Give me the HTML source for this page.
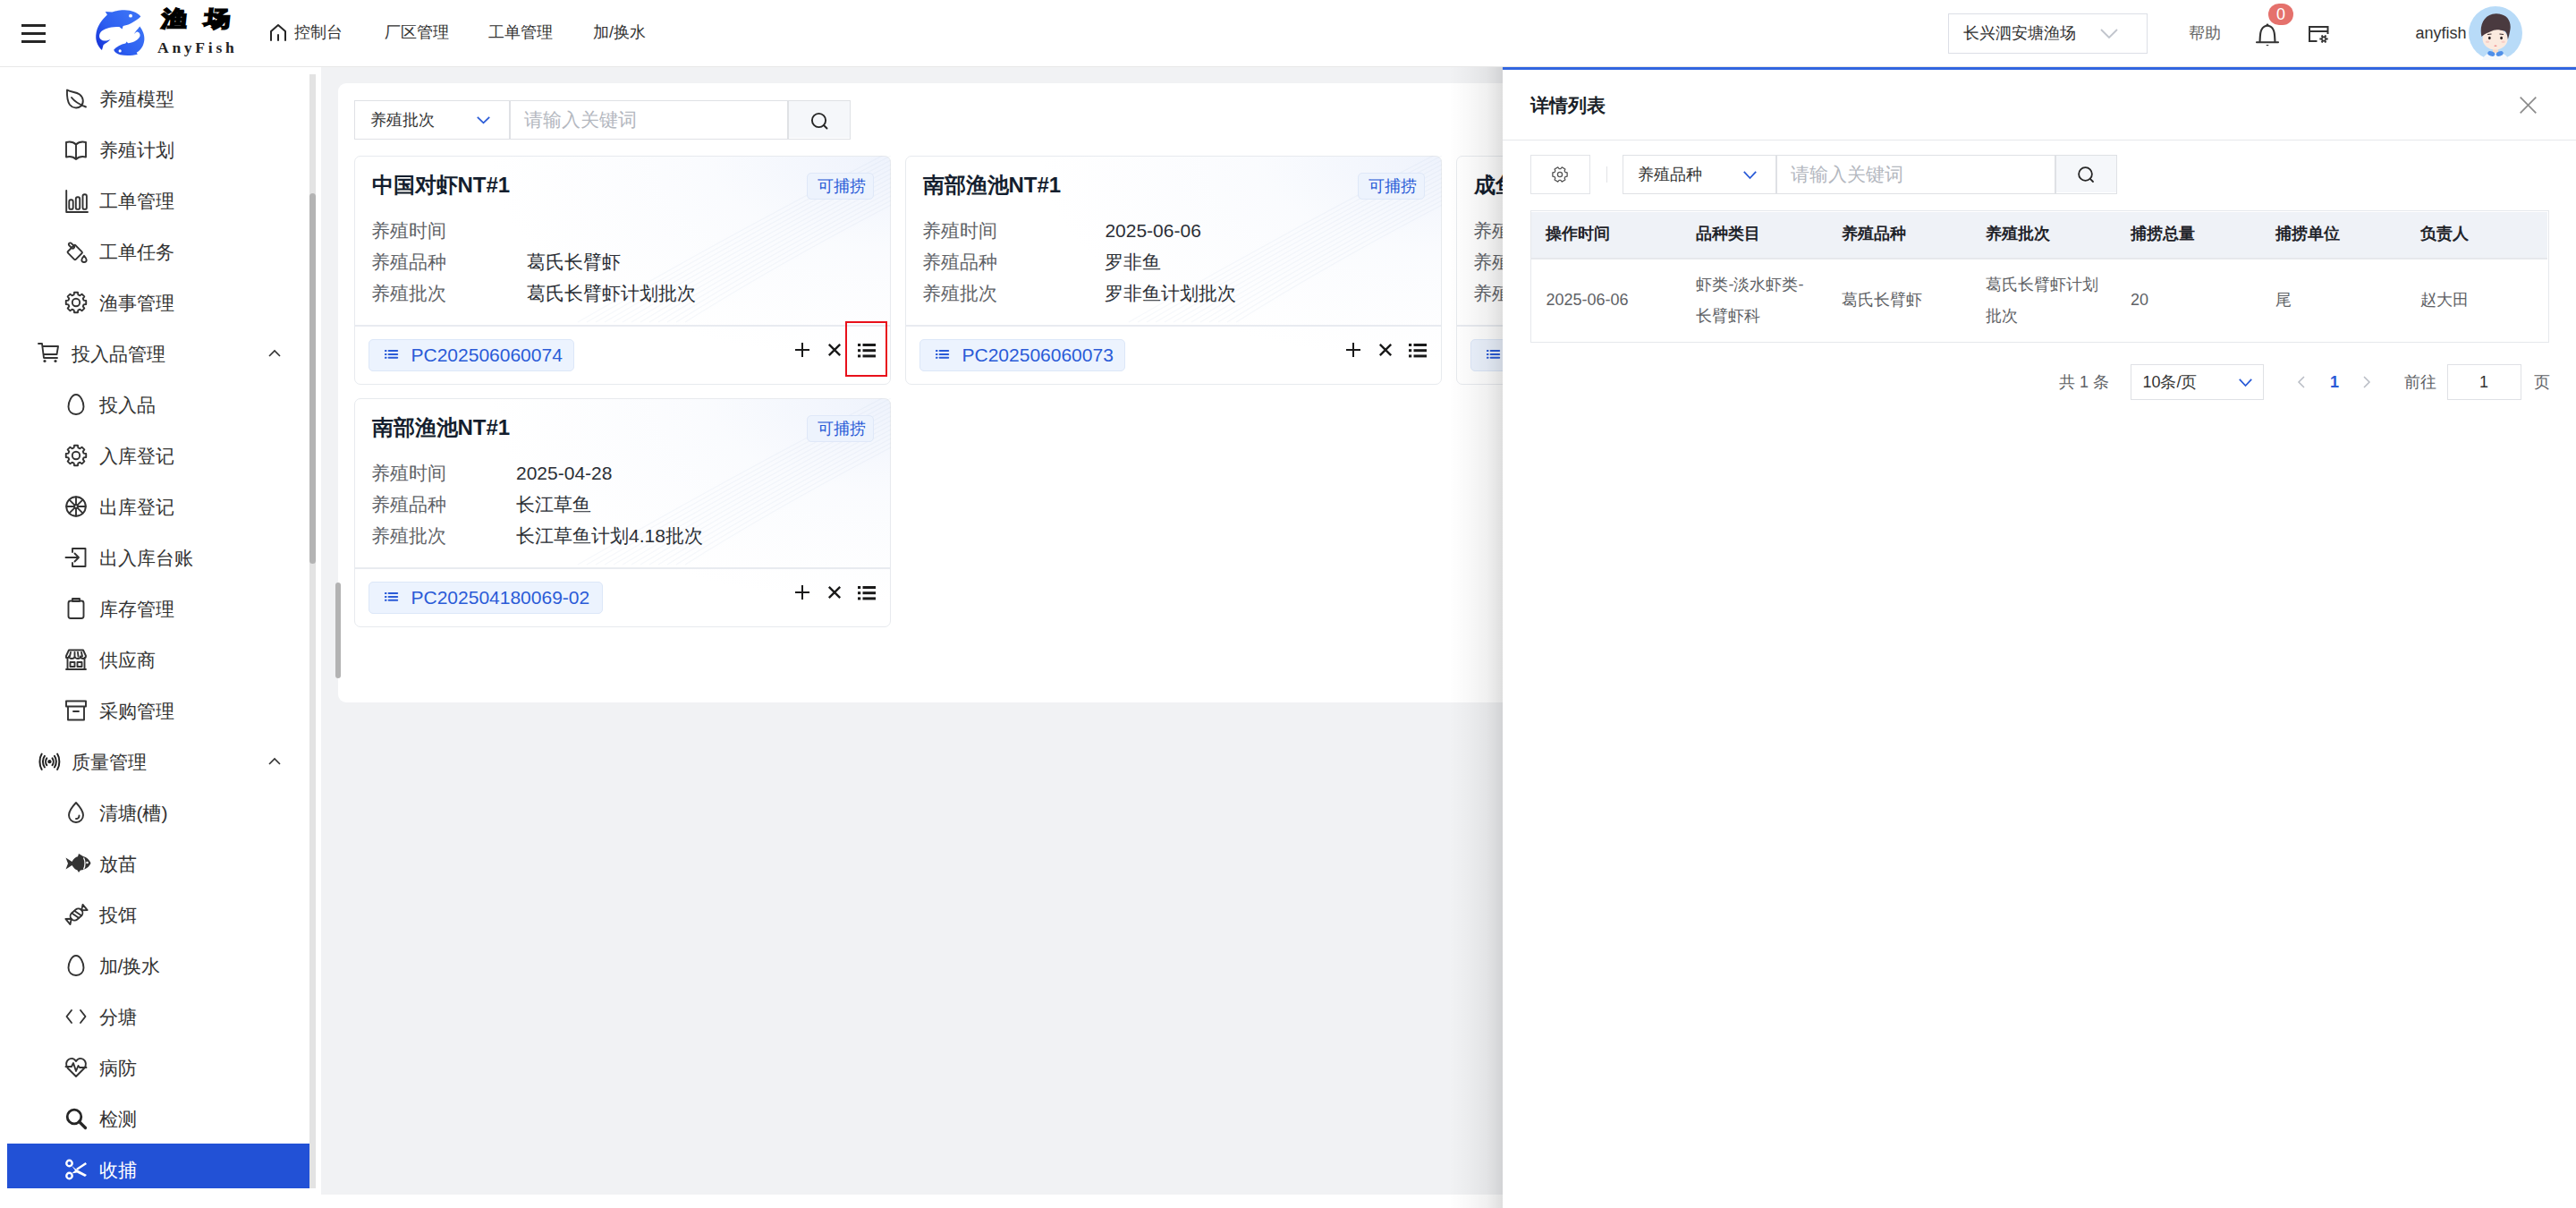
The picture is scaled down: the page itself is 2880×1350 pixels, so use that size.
<!DOCTYPE html>
<html><head><meta charset="utf-8">
<style>
*{box-sizing:border-box;margin:0;padding:0}
html,body{width:2880px;height:1350px;overflow:hidden;background:#fff;font-family:"Liberation Sans",sans-serif;color:#333}
.a{position:absolute}
.t{position:absolute;white-space:nowrap}
svg{position:absolute;overflow:visible}
</style></head><body>
<div class="a" style="left:359px;top:75px;width:2521px;height:1260px;background:#f1f2f4"></div>
<div class="a" style="left:378px;top:92.5px;width:2484px;height:692.0px;background:#fff;border-radius:9px"></div>
<div class="a" style="left:396px;top:111.5px;width:555px;height:44.0px;border:1.5px solid #dfe1e5;background:#fff"></div>
<div class="a" style="left:569px;top:112px;width:1.5px;height:43px;background:#dfe1e5"></div>
<div class="a" style="left:880px;top:112px;width:1.5px;height:43px;background:#dfe1e5"></div>
<div class="a" style="left:881.5px;top:113px;width:68.0px;height:41px;background:#f5f7fa"></div>
<div class="t" style="left:414px;top:119.9px;font-size:18px;line-height:28px;height:28px;color:#333;font-weight:normal;">养殖批次</div>
<svg style="left:533px;top:130px;" width="15" height="8" viewBox="0 0 15 8"><path d="M0.8,0.8 L7.5,7.3 L14.2,0.8" fill="none" stroke="#2a5bd7" stroke-width="1.8"/></svg>
<div class="t" style="left:585.6px;top:117.1px;font-size:21px;line-height:33px;height:33px;color:#b4b8bf;font-weight:normal;">请输入关键词</div>
<svg style="left:907px;top:125.5px;" width="19" height="18" viewBox="0 0 19 18"><circle cx="8.5" cy="8.5" r="7.6" fill="none" stroke="#262626" stroke-width="1.9"/><path d="M14,14 L17.5,17.5" stroke="#262626" stroke-width="1.9" stroke-linecap="round"/></svg>
<div class="a" style="left:396px;top:174px;width:600px;height:256px;border:1.5px solid #e7eaee;border-radius:7px;background:radial-gradient(ellipse 75% 90% at 100% 0%,rgba(225,233,250,0.55) 0%,rgba(240,244,252,0.35) 45%,rgba(255,255,255,0) 100%),#fff"></div>
<svg style="left:396px;top:174px;overflow:hidden" width="600" height="256" viewBox="0 0 600 256"><path d="M250,186 Q420,88 600,-5" fill="none" stroke="rgba(185,198,225,0.13)" stroke-width="1.2"/><path d="M260,186 Q424,91 600,0" fill="none" stroke="rgba(185,198,225,0.13)" stroke-width="1.2"/><path d="M270,186 Q428,94 600,5" fill="none" stroke="rgba(185,198,225,0.13)" stroke-width="1.2"/><path d="M280,186 Q432,97 600,10" fill="none" stroke="rgba(185,198,225,0.13)" stroke-width="1.2"/><path d="M290,186 Q436,100 600,15" fill="none" stroke="rgba(185,198,225,0.13)" stroke-width="1.2"/><path d="M300,186 Q440,103 600,20" fill="none" stroke="rgba(185,198,225,0.13)" stroke-width="1.2"/><path d="M310,186 Q444,106 600,25" fill="none" stroke="rgba(185,198,225,0.13)" stroke-width="1.2"/><path d="M320,186 Q448,109 600,30" fill="none" stroke="rgba(185,198,225,0.13)" stroke-width="1.2"/><path d="M330,186 Q452,112 600,35" fill="none" stroke="rgba(185,198,225,0.13)" stroke-width="1.2"/><path d="M340,186 Q456,115 600,40" fill="none" stroke="rgba(185,198,225,0.13)" stroke-width="1.2"/><path d="M350,186 Q460,118 600,45" fill="none" stroke="rgba(185,198,225,0.13)" stroke-width="1.2"/><path d="M360,186 Q464,121 600,50" fill="none" stroke="rgba(185,198,225,0.13)" stroke-width="1.2"/><path d="M370,186 Q468,124 600,55" fill="none" stroke="rgba(185,198,225,0.13)" stroke-width="1.2"/></svg>
<div class="t" style="left:415.5px;top:188.4px;font-size:24px;line-height:38px;height:38px;color:#141e2e;font-weight:bold;">中国对虾NT#1</div>
<div class="a" style="left:901.5px;top:193px;width:75.5px;height:29.5px;background:#edf3fd;border:1px solid #dfe8f8;border-radius:5px"></div>
<div class="t" style="left:914px;top:194.3px;font-size:18px;line-height:28px;height:28px;color:#2a5bd7;font-weight:normal;">可捕捞</div>
<div class="t" style="left:415px;top:241.3px;font-size:21px;line-height:33px;height:33px;color:#5f6368;font-weight:normal;">养殖时间</div>
<div class="t" style="left:415px;top:276.0px;font-size:21px;line-height:33px;height:33px;color:#5f6368;font-weight:normal;">养殖品种</div>
<div class="t" style="left:589px;top:276.0px;font-size:21px;line-height:33px;height:33px;color:#2b2f36;font-weight:normal;">葛氏长臂虾</div>
<div class="t" style="left:415px;top:310.6px;font-size:21px;line-height:33px;height:33px;color:#5f6368;font-weight:normal;">养殖批次</div>
<div class="t" style="left:589px;top:310.6px;font-size:21px;line-height:33px;height:33px;color:#2b2f36;font-weight:normal;">葛氏长臂虾计划批次</div>
<div class="a" style="left:397px;top:363px;width:598px;height:1.5px;background:#e8ebf0"></div>
<div class="a" style="left:412.3px;top:379px;width:230.2px;height:35.69999999999999px;background:#ecf3fe;border:1px solid #dce7f8;border-radius:5px"></div>
<svg style="left:429.6px;top:391px;" width="16" height="10" viewBox="0 0 16 10"><g fill="#2a5bd7"><rect x="0" y="0" width="2.4" height="2" rx="0.5"/><rect x="3.6" y="0" width="11.6" height="2" rx="1"/><rect x="0" y="3.9" width="2.4" height="2" rx="0.5"/><rect x="3.6" y="3.9" width="11.6" height="2" rx="1"/><rect x="0" y="7.8" width="2.4" height="2" rx="0.5"/><rect x="3.6" y="7.8" width="11.6" height="2" rx="1"/></g></svg>
<div class="t" style="left:459.5px;top:380.3px;font-size:21px;line-height:33px;height:33px;color:#2a5bd7;font-weight:normal;">PC202506060074</div>
<svg style="left:889px;top:383.4px;" width="16" height="16" viewBox="0 0 16 16"><path d="M8,0 L8,16 M0,8 L16,8" stroke="#1a1a1a" stroke-width="2"/></svg>
<svg style="left:926px;top:384.4px;" width="14" height="14" viewBox="0 0 14 14"><path d="M0.8,0.8 L13.2,13.2 M13.2,0.8 L0.8,13.2" stroke="#1a1a1a" stroke-width="2.4"/></svg>
<svg style="left:959px;top:383.7px;" width="20" height="16" viewBox="0 0 20 16"><g fill="#1a1a1a"><rect x="0" y="0" width="3.2" height="3"/><rect x="5.5" y="0" width="14.5" height="3"/><rect x="0" y="6.2" width="3.2" height="3"/><rect x="5.5" y="6.2" width="14.5" height="3"/><rect x="0" y="12.4" width="3.2" height="3"/><rect x="5.5" y="12.4" width="14.5" height="3"/></g></svg>
<div class="a" style="left:944.6px;top:358.6px;width:47.69999999999993px;height:62.599999999999966px;border:2px solid #e8101a"></div>
<div class="a" style="left:1012px;top:174px;width:600px;height:256px;border:1.5px solid #e7eaee;border-radius:7px;background:radial-gradient(ellipse 75% 90% at 100% 0%,rgba(225,233,250,0.55) 0%,rgba(240,244,252,0.35) 45%,rgba(255,255,255,0) 100%),#fff"></div>
<svg style="left:1012px;top:174px;overflow:hidden" width="600" height="256" viewBox="0 0 600 256"><path d="M250,186 Q420,88 600,-5" fill="none" stroke="rgba(185,198,225,0.13)" stroke-width="1.2"/><path d="M260,186 Q424,91 600,0" fill="none" stroke="rgba(185,198,225,0.13)" stroke-width="1.2"/><path d="M270,186 Q428,94 600,5" fill="none" stroke="rgba(185,198,225,0.13)" stroke-width="1.2"/><path d="M280,186 Q432,97 600,10" fill="none" stroke="rgba(185,198,225,0.13)" stroke-width="1.2"/><path d="M290,186 Q436,100 600,15" fill="none" stroke="rgba(185,198,225,0.13)" stroke-width="1.2"/><path d="M300,186 Q440,103 600,20" fill="none" stroke="rgba(185,198,225,0.13)" stroke-width="1.2"/><path d="M310,186 Q444,106 600,25" fill="none" stroke="rgba(185,198,225,0.13)" stroke-width="1.2"/><path d="M320,186 Q448,109 600,30" fill="none" stroke="rgba(185,198,225,0.13)" stroke-width="1.2"/><path d="M330,186 Q452,112 600,35" fill="none" stroke="rgba(185,198,225,0.13)" stroke-width="1.2"/><path d="M340,186 Q456,115 600,40" fill="none" stroke="rgba(185,198,225,0.13)" stroke-width="1.2"/><path d="M350,186 Q460,118 600,45" fill="none" stroke="rgba(185,198,225,0.13)" stroke-width="1.2"/><path d="M360,186 Q464,121 600,50" fill="none" stroke="rgba(185,198,225,0.13)" stroke-width="1.2"/><path d="M370,186 Q468,124 600,55" fill="none" stroke="rgba(185,198,225,0.13)" stroke-width="1.2"/></svg>
<div class="t" style="left:1031.5px;top:188.4px;font-size:24px;line-height:38px;height:38px;color:#141e2e;font-weight:bold;">南部渔池NT#1</div>
<div class="a" style="left:1517.5px;top:193px;width:75.5px;height:29.5px;background:#edf3fd;border:1px solid #dfe8f8;border-radius:5px"></div>
<div class="t" style="left:1530px;top:194.3px;font-size:18px;line-height:28px;height:28px;color:#2a5bd7;font-weight:normal;">可捕捞</div>
<div class="t" style="left:1031px;top:241.3px;font-size:21px;line-height:33px;height:33px;color:#5f6368;font-weight:normal;">养殖时间</div>
<div class="t" style="left:1235.4px;top:241.3px;font-size:21px;line-height:33px;height:33px;color:#2b2f36;font-weight:normal;">2025-06-06</div>
<div class="t" style="left:1031px;top:276.0px;font-size:21px;line-height:33px;height:33px;color:#5f6368;font-weight:normal;">养殖品种</div>
<div class="t" style="left:1235.4px;top:276.0px;font-size:21px;line-height:33px;height:33px;color:#2b2f36;font-weight:normal;">罗非鱼</div>
<div class="t" style="left:1031px;top:310.6px;font-size:21px;line-height:33px;height:33px;color:#5f6368;font-weight:normal;">养殖批次</div>
<div class="t" style="left:1235.4px;top:310.6px;font-size:21px;line-height:33px;height:33px;color:#2b2f36;font-weight:normal;">罗非鱼计划批次</div>
<div class="a" style="left:1013px;top:363px;width:598px;height:1.5px;background:#e8ebf0"></div>
<div class="a" style="left:1028.3px;top:379px;width:230.20000000000005px;height:35.69999999999999px;background:#ecf3fe;border:1px solid #dce7f8;border-radius:5px"></div>
<svg style="left:1045.6px;top:391px;" width="16" height="10" viewBox="0 0 16 10"><g fill="#2a5bd7"><rect x="0" y="0" width="2.4" height="2" rx="0.5"/><rect x="3.6" y="0" width="11.6" height="2" rx="1"/><rect x="0" y="3.9" width="2.4" height="2" rx="0.5"/><rect x="3.6" y="3.9" width="11.6" height="2" rx="1"/><rect x="0" y="7.8" width="2.4" height="2" rx="0.5"/><rect x="3.6" y="7.8" width="11.6" height="2" rx="1"/></g></svg>
<div class="t" style="left:1075.5px;top:380.3px;font-size:21px;line-height:33px;height:33px;color:#2a5bd7;font-weight:normal;">PC202506060073</div>
<svg style="left:1505px;top:383.4px;" width="16" height="16" viewBox="0 0 16 16"><path d="M8,0 L8,16 M0,8 L16,8" stroke="#1a1a1a" stroke-width="2"/></svg>
<svg style="left:1542px;top:384.4px;" width="14" height="14" viewBox="0 0 14 14"><path d="M0.8,0.8 L13.2,13.2 M13.2,0.8 L0.8,13.2" stroke="#1a1a1a" stroke-width="2.4"/></svg>
<svg style="left:1575px;top:383.7px;" width="20" height="16" viewBox="0 0 20 16"><g fill="#1a1a1a"><rect x="0" y="0" width="3.2" height="3"/><rect x="5.5" y="0" width="14.5" height="3"/><rect x="0" y="6.2" width="3.2" height="3"/><rect x="5.5" y="6.2" width="14.5" height="3"/><rect x="0" y="12.4" width="3.2" height="3"/><rect x="5.5" y="12.4" width="14.5" height="3"/></g></svg>
<div class="a" style="left:1628px;top:174px;width:600px;height:256px;border:1.5px solid #e7eaee;border-radius:7px;background:radial-gradient(ellipse 75% 90% at 100% 0%,rgba(225,233,250,0.55) 0%,rgba(240,244,252,0.35) 45%,rgba(255,255,255,0) 100%),#fff"></div>
<svg style="left:1628px;top:174px;overflow:hidden" width="600" height="256" viewBox="0 0 600 256"><path d="M250,186 Q420,88 600,-5" fill="none" stroke="rgba(185,198,225,0.13)" stroke-width="1.2"/><path d="M260,186 Q424,91 600,0" fill="none" stroke="rgba(185,198,225,0.13)" stroke-width="1.2"/><path d="M270,186 Q428,94 600,5" fill="none" stroke="rgba(185,198,225,0.13)" stroke-width="1.2"/><path d="M280,186 Q432,97 600,10" fill="none" stroke="rgba(185,198,225,0.13)" stroke-width="1.2"/><path d="M290,186 Q436,100 600,15" fill="none" stroke="rgba(185,198,225,0.13)" stroke-width="1.2"/><path d="M300,186 Q440,103 600,20" fill="none" stroke="rgba(185,198,225,0.13)" stroke-width="1.2"/><path d="M310,186 Q444,106 600,25" fill="none" stroke="rgba(185,198,225,0.13)" stroke-width="1.2"/><path d="M320,186 Q448,109 600,30" fill="none" stroke="rgba(185,198,225,0.13)" stroke-width="1.2"/><path d="M330,186 Q452,112 600,35" fill="none" stroke="rgba(185,198,225,0.13)" stroke-width="1.2"/><path d="M340,186 Q456,115 600,40" fill="none" stroke="rgba(185,198,225,0.13)" stroke-width="1.2"/><path d="M350,186 Q460,118 600,45" fill="none" stroke="rgba(185,198,225,0.13)" stroke-width="1.2"/><path d="M360,186 Q464,121 600,50" fill="none" stroke="rgba(185,198,225,0.13)" stroke-width="1.2"/><path d="M370,186 Q468,124 600,55" fill="none" stroke="rgba(185,198,225,0.13)" stroke-width="1.2"/></svg>
<div class="t" style="left:1647.5px;top:188.4px;font-size:24px;line-height:38px;height:38px;color:#141e2e;font-weight:bold;">成鱼池NT#1</div>
<div class="a" style="left:2133.5px;top:193px;width:75.5px;height:29.5px;background:#edf3fd;border:1px solid #dfe8f8;border-radius:5px"></div>
<div class="t" style="left:2146px;top:194.3px;font-size:18px;line-height:28px;height:28px;color:#2a5bd7;font-weight:normal;">可捕捞</div>
<div class="t" style="left:1647px;top:241.3px;font-size:21px;line-height:33px;height:33px;color:#5f6368;font-weight:normal;">养殖时间</div>
<div class="t" style="left:1851px;top:241.3px;font-size:21px;line-height:33px;height:33px;color:#2b2f36;font-weight:normal;">2025-06-06</div>
<div class="t" style="left:1647px;top:276.0px;font-size:21px;line-height:33px;height:33px;color:#5f6368;font-weight:normal;">养殖品种</div>
<div class="t" style="left:1851px;top:276.0px;font-size:21px;line-height:33px;height:33px;color:#2b2f36;font-weight:normal;">罗非鱼</div>
<div class="t" style="left:1647px;top:310.6px;font-size:21px;line-height:33px;height:33px;color:#5f6368;font-weight:normal;">养殖批次</div>
<div class="t" style="left:1851px;top:310.6px;font-size:21px;line-height:33px;height:33px;color:#2b2f36;font-weight:normal;">罗非鱼计划批次</div>
<div class="a" style="left:1629px;top:363px;width:598px;height:1.5px;background:#e8ebf0"></div>
<div class="a" style="left:1644.3px;top:379px;width:230.20000000000005px;height:35.69999999999999px;background:#ecf3fe;border:1px solid #dce7f8;border-radius:5px"></div>
<svg style="left:1661.6px;top:391px;" width="16" height="10" viewBox="0 0 16 10"><g fill="#2a5bd7"><rect x="0" y="0" width="2.4" height="2" rx="0.5"/><rect x="3.6" y="0" width="11.6" height="2" rx="1"/><rect x="0" y="3.9" width="2.4" height="2" rx="0.5"/><rect x="3.6" y="3.9" width="11.6" height="2" rx="1"/><rect x="0" y="7.8" width="2.4" height="2" rx="0.5"/><rect x="3.6" y="7.8" width="11.6" height="2" rx="1"/></g></svg>
<div class="t" style="left:1691.5px;top:380.3px;font-size:21px;line-height:33px;height:33px;color:#2a5bd7;font-weight:normal;">PC202506060072</div>
<svg style="left:2121px;top:383.4px;" width="16" height="16" viewBox="0 0 16 16"><path d="M8,0 L8,16 M0,8 L16,8" stroke="#1a1a1a" stroke-width="2"/></svg>
<svg style="left:2158px;top:384.4px;" width="14" height="14" viewBox="0 0 14 14"><path d="M0.8,0.8 L13.2,13.2 M13.2,0.8 L0.8,13.2" stroke="#1a1a1a" stroke-width="2.4"/></svg>
<svg style="left:2191px;top:383.7px;" width="20" height="16" viewBox="0 0 20 16"><g fill="#1a1a1a"><rect x="0" y="0" width="3.2" height="3"/><rect x="5.5" y="0" width="14.5" height="3"/><rect x="0" y="6.2" width="3.2" height="3"/><rect x="5.5" y="6.2" width="14.5" height="3"/><rect x="0" y="12.4" width="3.2" height="3"/><rect x="5.5" y="12.4" width="14.5" height="3"/></g></svg>
<div class="a" style="left:396px;top:445px;width:600px;height:256px;border:1.5px solid #e7eaee;border-radius:7px;background:radial-gradient(ellipse 75% 90% at 100% 0%,rgba(225,233,250,0.55) 0%,rgba(240,244,252,0.35) 45%,rgba(255,255,255,0) 100%),#fff"></div>
<svg style="left:396px;top:445px;overflow:hidden" width="600" height="256" viewBox="0 0 600 256"><path d="M250,186 Q420,88 600,-5" fill="none" stroke="rgba(185,198,225,0.13)" stroke-width="1.2"/><path d="M260,186 Q424,91 600,0" fill="none" stroke="rgba(185,198,225,0.13)" stroke-width="1.2"/><path d="M270,186 Q428,94 600,5" fill="none" stroke="rgba(185,198,225,0.13)" stroke-width="1.2"/><path d="M280,186 Q432,97 600,10" fill="none" stroke="rgba(185,198,225,0.13)" stroke-width="1.2"/><path d="M290,186 Q436,100 600,15" fill="none" stroke="rgba(185,198,225,0.13)" stroke-width="1.2"/><path d="M300,186 Q440,103 600,20" fill="none" stroke="rgba(185,198,225,0.13)" stroke-width="1.2"/><path d="M310,186 Q444,106 600,25" fill="none" stroke="rgba(185,198,225,0.13)" stroke-width="1.2"/><path d="M320,186 Q448,109 600,30" fill="none" stroke="rgba(185,198,225,0.13)" stroke-width="1.2"/><path d="M330,186 Q452,112 600,35" fill="none" stroke="rgba(185,198,225,0.13)" stroke-width="1.2"/><path d="M340,186 Q456,115 600,40" fill="none" stroke="rgba(185,198,225,0.13)" stroke-width="1.2"/><path d="M350,186 Q460,118 600,45" fill="none" stroke="rgba(185,198,225,0.13)" stroke-width="1.2"/><path d="M360,186 Q464,121 600,50" fill="none" stroke="rgba(185,198,225,0.13)" stroke-width="1.2"/><path d="M370,186 Q468,124 600,55" fill="none" stroke="rgba(185,198,225,0.13)" stroke-width="1.2"/></svg>
<div class="t" style="left:415.5px;top:459.4px;font-size:24px;line-height:38px;height:38px;color:#141e2e;font-weight:bold;">南部渔池NT#1</div>
<div class="a" style="left:901.5px;top:464px;width:75.5px;height:29.5px;background:#edf3fd;border:1px solid #dfe8f8;border-radius:5px"></div>
<div class="t" style="left:914px;top:465.3px;font-size:18px;line-height:28px;height:28px;color:#2a5bd7;font-weight:normal;">可捕捞</div>
<div class="t" style="left:415px;top:512.3px;font-size:21px;line-height:33px;height:33px;color:#5f6368;font-weight:normal;">养殖时间</div>
<div class="t" style="left:577px;top:512.3px;font-size:21px;line-height:33px;height:33px;color:#2b2f36;font-weight:normal;">2025-04-28</div>
<div class="t" style="left:415px;top:547.0px;font-size:21px;line-height:33px;height:33px;color:#5f6368;font-weight:normal;">养殖品种</div>
<div class="t" style="left:577px;top:547.0px;font-size:21px;line-height:33px;height:33px;color:#2b2f36;font-weight:normal;">长江草鱼</div>
<div class="t" style="left:415px;top:581.6px;font-size:21px;line-height:33px;height:33px;color:#5f6368;font-weight:normal;">养殖批次</div>
<div class="t" style="left:577px;top:581.6px;font-size:21px;line-height:33px;height:33px;color:#2b2f36;font-weight:normal;">长江草鱼计划4.18批次</div>
<div class="a" style="left:397px;top:634px;width:598px;height:1.5px;background:#e8ebf0"></div>
<div class="a" style="left:412.3px;top:650px;width:261.99999999999994px;height:35.700000000000045px;background:#ecf3fe;border:1px solid #dce7f8;border-radius:5px"></div>
<svg style="left:429.6px;top:662px;" width="16" height="10" viewBox="0 0 16 10"><g fill="#2a5bd7"><rect x="0" y="0" width="2.4" height="2" rx="0.5"/><rect x="3.6" y="0" width="11.6" height="2" rx="1"/><rect x="0" y="3.9" width="2.4" height="2" rx="0.5"/><rect x="3.6" y="3.9" width="11.6" height="2" rx="1"/><rect x="0" y="7.8" width="2.4" height="2" rx="0.5"/><rect x="3.6" y="7.8" width="11.6" height="2" rx="1"/></g></svg>
<div class="t" style="left:459.5px;top:651.3px;font-size:21px;line-height:33px;height:33px;color:#2a5bd7;font-weight:normal;">PC202504180069-02</div>
<svg style="left:889px;top:654.4px;" width="16" height="16" viewBox="0 0 16 16"><path d="M8,0 L8,16 M0,8 L16,8" stroke="#1a1a1a" stroke-width="2"/></svg>
<svg style="left:926px;top:655.4px;" width="14" height="14" viewBox="0 0 14 14"><path d="M0.8,0.8 L13.2,13.2 M13.2,0.8 L0.8,13.2" stroke="#1a1a1a" stroke-width="2.4"/></svg>
<svg style="left:959px;top:654.6999999999999px;" width="20" height="16" viewBox="0 0 20 16"><g fill="#1a1a1a"><rect x="0" y="0" width="3.2" height="3"/><rect x="5.5" y="0" width="14.5" height="3"/><rect x="0" y="6.2" width="3.2" height="3"/><rect x="5.5" y="6.2" width="14.5" height="3"/><rect x="0" y="12.4" width="3.2" height="3"/><rect x="5.5" y="12.4" width="14.5" height="3"/></g></svg>
<div class="a" style="left:375px;top:651px;width:6px;height:107px;background:#b3b3b3;border-radius:3px"></div>
<div class="a" style="left:0;top:75px;width:359px;height:1253px;background:#fff;overflow:hidden">
<svg style="left:73px;top:23.599999999999994px;" width="24" height="24" viewBox="0 0 24 24"><path fill="none" stroke="#333" stroke-width="1.9" stroke-linecap="round" stroke-linejoin="round" d="M2,1.5 C2,1.5 1.5,13 5,18 C8,22 14,22.5 17.5,19.5 C21,16 20.5,10 16,6.5 C12,3.5 6,4 2,1.5 Z M7,10 C10,14 15,17.5 23,20.5"/></svg>
<div class="t" style="left:110.5px;top:19.4px;font-size:21px;line-height:33px;height:33px;color:#333;font-weight:normal;">养殖模型</div>
<svg style="left:73px;top:80.57px;" width="24" height="24" viewBox="0 0 24 24"><path fill="none" stroke="#333" stroke-width="1.9" stroke-linecap="round" stroke-linejoin="round" d="M1,3 C5,2 9,2.5 12,5.5 C15,2.5 19,2 23,3 L23,19.5 C19,18.5 15,19 12,22 C9,19 5,18.5 1,19.5 Z M12,5.5 L12,22"/></svg>
<div class="t" style="left:110.5px;top:76.4px;font-size:21px;line-height:33px;height:33px;color:#333;font-weight:normal;">养殖计划</div>
<svg style="left:73px;top:137.54px;" width="24" height="24" viewBox="0 0 24 24"><path fill="none" stroke="#333" stroke-width="1.9" stroke-linecap="round" stroke-linejoin="round" d="M1.2,0 L1.2,24 L25,24"/><rect x="4.3" y="10.3" width="4.4" height="10.6" rx="2" fill="none" stroke="#333" stroke-width="1.9" stroke-linecap="round" stroke-linejoin="round"/><rect x="11.8" y="7.2" width="4.4" height="13.7" rx="2" fill="none" stroke="#333" stroke-width="1.9" stroke-linecap="round" stroke-linejoin="round"/><rect x="19.5" y="4.2" width="4.4" height="16.7" rx="2" fill="none" stroke="#333" stroke-width="1.9" stroke-linecap="round" stroke-linejoin="round"/></svg>
<div class="t" style="left:110.5px;top:133.4px;font-size:21px;line-height:33px;height:33px;color:#333;font-weight:normal;">工单管理</div>
<svg style="left:73px;top:194.51px;" width="24" height="24" viewBox="0 0 24 24"><rect x="4.5" y="6" width="12.5" height="12" rx="1.2" transform="rotate(45 10.75 12)" fill="none" stroke="#333" stroke-width="1.9" stroke-linecap="round" stroke-linejoin="round"/><rect x="3.2" y="2.8" width="7.5" height="3.4" rx="1.7" transform="rotate(45 6.95 4.5)" fill="none" stroke="#333" stroke-width="1.9" stroke-linecap="round" stroke-linejoin="round"/><path fill="none" stroke="#333" stroke-width="1.9" stroke-linecap="round" stroke-linejoin="round" d="M21,15.8 C21,15.8 18.3,18.8 18.3,20.5 C18.3,22 19.5,23 21,23 C22.5,23 23.7,22 23.7,20.5 C23.7,18.8 21,15.8 21,15.8 Z"/></svg>
<div class="t" style="left:110.5px;top:190.3px;font-size:21px;line-height:33px;height:33px;color:#333;font-weight:normal;">工单任务</div>
<svg style="left:73px;top:251.48000000000002px;" width="24" height="24" viewBox="0 0 24 24"><path fill="none" stroke="#333" stroke-width="1.9" stroke-linecap="round" stroke-linejoin="round" d="M20.58,9.63 L23.23,10.04 L23.23,13.96 L20.58,14.37 L19.74,16.39 L21.33,18.56 L18.56,21.33 L16.39,19.74 L14.37,20.58 L13.96,23.23 L10.04,23.23 L9.63,20.58 L7.61,19.74 L5.44,21.33 L2.67,18.56 L4.26,16.39 L3.42,14.37 L0.77,13.96 L0.77,10.04 L3.42,9.63 L4.26,7.61 L2.67,5.44 L5.44,2.67 L7.61,4.26 L9.63,3.42 L10.04,0.77 L13.96,0.77 L14.37,3.42 L16.39,4.26 L18.56,2.67 L21.33,5.44 L19.74,7.61 Z"/><circle cx="12" cy="12" r="4.2" fill="none" stroke="#333" stroke-width="1.9" stroke-linecap="round" stroke-linejoin="round"/></svg>
<div class="t" style="left:110.5px;top:247.3px;font-size:21px;line-height:33px;height:33px;color:#333;font-weight:normal;">渔事管理</div>
<svg style="left:43px;top:308.45000000000005px;" width="24" height="24" viewBox="0 0 24 24"><path fill="none" stroke="#333" stroke-width="1.9" stroke-linecap="round" stroke-linejoin="round" d="M0,1 L4,1 L6,17 L21,17 M5,4 L22,4 L20.5,13 L5.5,13"/><circle cx="7" cy="20.5" r="1.6" fill="#333"/><circle cx="19" cy="20.5" r="1.6" fill="#333"/></svg>
<div class="t" style="left:80.3px;top:304.3px;font-size:21px;line-height:33px;height:33px;color:#333;font-weight:normal;">投入品管理</div>
<svg style="left:300px;top:315.95000000000005px;" width="14" height="8" viewBox="0 0 14 8"><path d="M1,7 L7,1 L13,7" fill="none" stroke="#333" stroke-width="1.6"/></svg>
<svg style="left:73px;top:365.41999999999996px;" width="24" height="24" viewBox="0 0 24 24"><path fill="none" stroke="#333" stroke-width="1.9" stroke-linecap="round" stroke-linejoin="round" d="M12,1 C17,1 20.5,9 20.5,14.5 C20.5,19.5 17,23 12,23 C7,23 3.5,19.5 3.5,14.5 C3.5,9 7,1 12,1 Z"/></svg>
<div class="t" style="left:110.5px;top:361.2px;font-size:21px;line-height:33px;height:33px;color:#333;font-weight:normal;">投入品</div>
<svg style="left:73px;top:422.39px;" width="24" height="24" viewBox="0 0 24 24"><path fill="none" stroke="#333" stroke-width="1.9" stroke-linecap="round" stroke-linejoin="round" d="M20.58,9.63 L23.23,10.04 L23.23,13.96 L20.58,14.37 L19.74,16.39 L21.33,18.56 L18.56,21.33 L16.39,19.74 L14.37,20.58 L13.96,23.23 L10.04,23.23 L9.63,20.58 L7.61,19.74 L5.44,21.33 L2.67,18.56 L4.26,16.39 L3.42,14.37 L0.77,13.96 L0.77,10.04 L3.42,9.63 L4.26,7.61 L2.67,5.44 L5.44,2.67 L7.61,4.26 L9.63,3.42 L10.04,0.77 L13.96,0.77 L14.37,3.42 L16.39,4.26 L18.56,2.67 L21.33,5.44 L19.74,7.61 Z"/><circle cx="12" cy="12" r="4.2" fill="none" stroke="#333" stroke-width="1.9" stroke-linecap="round" stroke-linejoin="round"/></svg>
<div class="t" style="left:110.5px;top:418.2px;font-size:21px;line-height:33px;height:33px;color:#333;font-weight:normal;">入库登记</div>
<svg style="left:73px;top:479.36px;" width="24" height="24" viewBox="0 0 24 24"><circle cx="12" cy="12" r="10.8" fill="none" stroke="#333" stroke-width="1.9" stroke-linecap="round" stroke-linejoin="round"/><circle cx="12" cy="12" r="2" fill="none" stroke="#333" stroke-width="1.9" stroke-linecap="round" stroke-linejoin="round"/><path fill="none" stroke="#333" stroke-width="1.9" stroke-linecap="round" stroke-linejoin="round" d="M12,1.2 L12,10 M12,14 L12,22.8 M1.2,12 L10,12 M14,12 L22.8,12 M4.4,4.4 L10.6,10.6 M13.4,13.4 L19.6,19.6 M19.6,4.4 L13.4,10.6 M10.6,13.4 L4.4,19.6"/></svg>
<div class="t" style="left:110.5px;top:475.2px;font-size:21px;line-height:33px;height:33px;color:#333;font-weight:normal;">出库登记</div>
<svg style="left:73px;top:536.33px;" width="24" height="24" viewBox="0 0 24 24"><path fill="none" stroke="#333" stroke-width="1.9" stroke-linecap="round" stroke-linejoin="round" d="M8,6 L8,2 L22.5,2 L22.5,22 L8,22 L8,18 M0.5,12 L15,12 M10.5,7.5 L15,12 L10.5,16.5"/></svg>
<div class="t" style="left:110.5px;top:532.1px;font-size:21px;line-height:33px;height:33px;color:#333;font-weight:normal;">出入库台账</div>
<svg style="left:73px;top:593.3000000000001px;" width="24" height="24" viewBox="0 0 24 24"><rect x="3.5" y="3.5" width="17" height="19.5" rx="2.5" fill="none" stroke="#333" stroke-width="1.9" stroke-linecap="round" stroke-linejoin="round"/><path fill="none" stroke="#333" stroke-width="1.9" stroke-linecap="round" stroke-linejoin="round" d="M8,1 L16,1 L16,4 L8,4 Z"/></svg>
<div class="t" style="left:110.5px;top:589.1px;font-size:21px;line-height:33px;height:33px;color:#333;font-weight:normal;">库存管理</div>
<svg style="left:73px;top:650.27px;" width="24" height="24" viewBox="0 0 24 24"><path fill="none" stroke="#333" stroke-width="1.9" stroke-linecap="round" stroke-linejoin="round" d="M1,23 L23,23 M2.5,10 L2.5,23 M21.5,10 L21.5,23 M4,1.5 L20,1.5 L23,8 C23,10 21.5,11 20,11 C18.5,11 17,10 17,8.5 C17,10 15.5,11 14,11 C12.5,11 10.5,10 10.5,8.5 C10.5,10 9,11 7,11 C5.5,11 4,10 4,8.5 C4,10 2.5,11 1,10 L1,8 Z M6,4 L5,8.5 M10.5,4 L10.5,8.5 M14,4 L14.5,8.5 M18,4 L19,8.5"/><rect x="5.5" y="15" width="5" height="5" fill="none" stroke="#333" stroke-width="1.9" stroke-linecap="round" stroke-linejoin="round"/><rect x="13.5" y="15" width="5" height="5" fill="none" stroke="#333" stroke-width="1.9" stroke-linecap="round" stroke-linejoin="round"/></svg>
<div class="t" style="left:110.5px;top:646.1px;font-size:21px;line-height:33px;height:33px;color:#333;font-weight:normal;">供应商</div>
<svg style="left:73px;top:707.24px;" width="24" height="24" viewBox="0 0 24 24"><path fill="none" stroke="#333" stroke-width="1.9" stroke-linecap="round" stroke-linejoin="round" d="M1,1.5 L23,1.5 L23,7.5 L1,7.5 Z M3,7.5 L3,22.5 L21,22.5 L21,7.5 M9,13 L15,13"/></svg>
<div class="t" style="left:110.5px;top:703.1px;font-size:21px;line-height:33px;height:33px;color:#333;font-weight:normal;">采购管理</div>
<svg style="left:43px;top:764.21px;" width="24" height="24" viewBox="0 0 24 24"><circle cx="12.4" cy="12.2" r="2.1" fill="#222"/><path fill="none" stroke="#222" stroke-width="2" stroke-linecap="round" d="M3.7,3.5 C0.7,8 0.7,16.5 3.7,21 M6.9,5.8 C4.3,9.2 4.3,15 6.9,18.5 M9.3,8.3 C7.7,10.5 7.7,14 9.3,16.2 M15.5,8.3 C17.1,10.5 17.1,14 15.5,16.2 M17.9,5.8 C20.5,9.2 20.5,15 17.9,18.5 M21.1,3.5 C24.1,8 24.1,16.5 21.1,21"/></svg>
<div class="t" style="left:80.3px;top:760.0px;font-size:21px;line-height:33px;height:33px;color:#333;font-weight:normal;">质量管理</div>
<svg style="left:300px;top:771.71px;" width="14" height="8" viewBox="0 0 14 8"><path d="M1,7 L7,1 L13,7" fill="none" stroke="#333" stroke-width="1.6"/></svg>
<svg style="left:73px;top:821.18px;" width="24" height="24" viewBox="0 0 24 24"><path fill="none" stroke="#333" stroke-width="1.9" stroke-linecap="round" stroke-linejoin="round" d="M12,1 C12,1 4,9.5 4,15 C4,19.5 7.5,23 12,23 C16.5,23 20,19.5 20,15 C20,9.5 12,1 12,1 Z M15.5,15.5 C15.5,17.5 14,19 12,19"/></svg>
<div class="t" style="left:110.5px;top:817.0px;font-size:21px;line-height:33px;height:33px;color:#333;font-weight:normal;">清塘(槽)</div>
<svg style="left:73px;top:878.15px;" width="24" height="24" viewBox="0 0 24 24"><path fill="#333" d="M0.5,5.5 L7.5,10 C9,6.5 12,4.5 14,4.2 L15,1 L20,4 C24,5 27,8 28.5,11.5 C27,15.5 23,19 17,19.5 L15,22 L13.5,19.5 C11,19 9,16.5 7.5,14 L0.5,18.5 L3,12 Z"/><path d="M20.5,5.5 C22.5,9 22.5,15 20.5,18.5" fill="none" stroke="#fff" stroke-width="1.3"/><circle cx="24.5" cy="11" r="1.3" fill="#fff"/></svg>
<div class="t" style="left:110.5px;top:874.0px;font-size:21px;line-height:33px;height:33px;color:#333;font-weight:normal;">放苗</div>
<svg style="left:73px;top:935.12px;" width="24" height="24" viewBox="0 0 24 24"><g transform="rotate(-40 12.5 12)"><rect x="5" y="7.3" width="15" height="9.4" rx="4.7" fill="none" stroke="#333" stroke-width="1.9" stroke-linecap="round" stroke-linejoin="round"/><path fill="none" stroke="#333" stroke-width="1.9" stroke-linecap="round" stroke-linejoin="round" d="M9.5,7.5 L12,16.5 M13.5,7.5 L16,16.5"/><path fill="none" stroke="#333" stroke-width="1.9" stroke-linecap="round" stroke-linejoin="round" d="M5,12 L0,8 L0,16 Z M20,12 L25,8 L25,16 Z"/></g></svg>
<div class="t" style="left:110.5px;top:930.9px;font-size:21px;line-height:33px;height:33px;color:#333;font-weight:normal;">投饵</div>
<svg style="left:73px;top:992.0899999999999px;" width="24" height="24" viewBox="0 0 24 24"><path fill="none" stroke="#333" stroke-width="1.9" stroke-linecap="round" stroke-linejoin="round" d="M12,1 C17,1 20.5,9 20.5,14.5 C20.5,19.5 17,23 12,23 C7,23 3.5,19.5 3.5,14.5 C3.5,9 7,1 12,1 Z"/></svg>
<div class="t" style="left:110.5px;top:987.9px;font-size:21px;line-height:33px;height:33px;color:#333;font-weight:normal;">加/换水</div>
<svg style="left:73px;top:1049.06px;" width="24" height="24" viewBox="0 0 24 24"><path fill="none" stroke="#333" stroke-width="1.9" stroke-linecap="round" stroke-linejoin="round" stroke-width="2.8" d="M7,5 L1.5,12 L7,19 M17,5 L22.5,12 L17,19"/></svg>
<div class="t" style="left:110.5px;top:1044.9px;font-size:21px;line-height:33px;height:33px;color:#333;font-weight:normal;">分塘</div>
<svg style="left:73px;top:1106.03px;" width="24" height="24" viewBox="0 0 24 24"><path fill="none" stroke="#333" stroke-width="1.9" stroke-linecap="round" stroke-linejoin="round" d="M12,22 L3,13 C0,10 0.5,4.5 4.5,2.5 C8,1 10.5,2.5 12,5 C13.5,2.5 16,1 19.5,2.5 C23.5,4.5 24,10 21,13 Z M0.5,11 L7,11 L9,7 L12,16 L14.5,10 L16,12 L23.5,12"/></svg>
<div class="t" style="left:110.5px;top:1101.8px;font-size:21px;line-height:33px;height:33px;color:#333;font-weight:normal;">病防</div>
<svg style="left:73px;top:1163.0px;" width="24" height="24" viewBox="0 0 24 24"><circle cx="10" cy="10" r="7.8" fill="none" stroke="#262626" stroke-width="2.8"/><path d="M15.5,15.5 L22.5,22.5" stroke="#262626" stroke-width="3.2" stroke-linecap="round"/></svg>
<div class="t" style="left:110.5px;top:1158.8px;font-size:21px;line-height:33px;height:33px;color:#333;font-weight:normal;">检测</div>
<div class="a" style="left:8px;top:1203.4699999999998px;width:338px;height:57.0px;background:#2251d6"></div>
<svg style="left:73px;top:1219.9699999999998px;" width="24" height="24" viewBox="0 0 24 24"><circle cx="4.5" cy="5" r="3.2" fill="none" stroke="#fff" stroke-width="2.4"/><circle cx="4.5" cy="19" r="3.2" fill="none" stroke="#fff" stroke-width="2.4"/><path fill="#fff" d="M7,7.5 L11,11 L24,18 L22,20 L13,15.5 L7,16.5 L11,13 Z M12,11 L22.5,4 L24,6 L14,12.5 Z"/></svg>
<div class="t" style="left:110.5px;top:1215.8px;font-size:21px;line-height:33px;height:33px;color:#fff;font-weight:normal;">收捕</div>
<div class="a" style="left:346px;top:8px;width:7px;height:1245px;background:#e3e3e3"></div>
<div class="a" style="left:346px;top:141px;width:7px;height:414px;background:#b3b3b3;border-radius:3.5px"></div>
</div>
<div class="a" style="left:0px;top:0px;width:2880px;height:74px;background:#fff"></div>
<div class="a" style="left:0px;top:74px;width:2880px;height:1px;background:#e8e8e8"></div>
<div class="a" style="left:24px;top:27px;width:27px;height:3px;background:#262626"></div>
<div class="a" style="left:24px;top:36px;width:27px;height:3px;background:#262626"></div>
<div class="a" style="left:24px;top:45px;width:27px;height:3px;background:#262626"></div>
<svg style="left:100px;top:5px;" width="70" height="65" viewBox="0 0 1301 1208"><defs><linearGradient id="fg" gradientUnits="userSpaceOnUse" x1="150" y1="900" x2="900" y2="300"><stop offset="0" stop-color="#1530d6"/><stop offset="0.45" stop-color="#2c5ef0"/><stop offset="1" stop-color="#3a70f5"/></linearGradient></defs>
<path fill="url(#fg)" d="M1065,250 C1000,170 870,115 720,118 C600,120 500,150 470,160 L330,150 L370,215 C260,320 150,450 135,640 C125,780 190,880 260,950 L290,840 C330,800 400,780 440,720 C380,760 280,770 230,720 C190,680 200,600 260,550 C340,490 460,465 620,465 L680,510 L700,445 C850,420 980,330 1065,250 Z"/>
<circle cx="855" cy="235" r="36" fill="#fff"/>
<path fill="url(#fg)" d="M505,945 C560,880 650,830 750,810 L775,770 L800,805 C900,790 990,760 1040,680 C1070,630 1040,570 990,565 C960,575 940,600 930,610 C950,560 1000,520 1045,455 C1110,540 1150,640 1140,740 C1130,860 1060,960 980,1000 L1000,1035 C900,1060 750,1065 640,1045 C570,1030 520,990 505,945 Z"/>
<circle cx="635" cy="965" r="30" fill="#fff"/></svg>
<div class="t" style="left:181px;top:2.4px;font-size:24px;line-height:38px;height:38px;color:#000;font-weight:900;letter-spacing:5px;-webkit-text-stroke:1.8px #000;font-family:'Liberation Serif',serif;transform:scaleX(1.2) skewX(-5deg);transform-origin:0 50%;">渔&nbsp;场</div>
<div class="t" style="left:176px;top:39.0px;font-size:17.5px;line-height:28px;height:28px;color:#222;font-weight:bold;letter-spacing:3.75px;font-family:'Liberation Serif',serif;">AnyFish</div>
<svg style="left:301px;top:26px;" width="20" height="20" viewBox="0 0 20 20"><path d="M2,19 L2,9 L10,2 L18,9 L18,19 M10,13 L10,19" fill="none" stroke="#262626" stroke-width="2" stroke-linecap="round" stroke-linejoin="round"/></svg>
<div class="t" style="left:329px;top:22.3px;font-size:18px;line-height:28px;height:28px;color:#333;font-weight:normal;">控制台</div>
<div class="t" style="left:430px;top:22.3px;font-size:18px;line-height:28px;height:28px;color:#333;font-weight:normal;">厂区管理</div>
<div class="t" style="left:546px;top:22.3px;font-size:18px;line-height:28px;height:28px;color:#333;font-weight:normal;">工单管理</div>
<div class="t" style="left:663px;top:22.3px;font-size:18px;line-height:28px;height:28px;color:#333;font-weight:normal;">加/换水</div>
<div class="a" style="left:2178px;top:15px;width:223px;height:45px;border:1.5px solid #dcdfe6;background:#fff"></div>
<div class="t" style="left:2195px;top:23.3px;font-size:18px;line-height:28px;height:28px;color:#333;font-weight:normal;">长兴泗安塘渔场</div>
<svg style="left:2348px;top:32px;" width="20" height="11" viewBox="0 0 20 11"><path d="M1,1 L10,10 L19,1" fill="none" stroke="#c0c4cc" stroke-width="1.8"/></svg>
<div class="t" style="left:2447px;top:23.3px;font-size:18px;line-height:28px;height:28px;color:#666;font-weight:normal;">帮助</div>
<svg style="left:2522px;top:25.5px;" width="26" height="26" viewBox="0 0 26 26"><path d="M1,21.2 L25,21.2 M4.5,21 C4.8,18 4.5,10 6.5,7 C8,4.2 10.5,2.8 13,2.8 C15.5,2.8 18,4.2 19.5,7 C21.5,10 21.2,18 21.5,21" fill="none" stroke="#333" stroke-width="2.1" stroke-linecap="round"/><circle cx="13" cy="1.8" r="1.4" fill="#333"/><path d="M11.2,24 L14.8,24 L13,25.6 Z" fill="#333"/></svg>
<div class="a" style="left:2536px;top:3.5px;width:28px;height:24.5px;border-radius:14px;background:#e5716c;color:#fff;font-size:18px;line-height:25px;text-align:center">0</div>
<svg style="left:2581px;top:28.5px;" width="23" height="21" viewBox="0 0 23 21"><path d="M9.5,17 L1,17 L1,1 L21.5,1 L21.5,9 M1,6 L21.5,6" fill="none" stroke="#333" stroke-width="2"/><path d="M19.81,13.44 L21.67,13.40 L21.67,15.60 L19.81,15.56 L19.32,16.40 L20.29,18.00 L18.39,19.10 L17.49,17.46 L16.51,17.46 L15.61,19.10 L13.71,18.00 L14.68,16.40 L14.19,15.56 L12.33,15.60 L12.33,13.40 L14.19,13.44 L14.68,12.60 L13.71,11.00 L15.61,9.90 L16.51,11.54 L17.49,11.54 L18.39,9.90 L20.29,11.00 L19.32,12.60 Z" fill="#333"/><circle cx="17" cy="14.5" r="1.3" fill="#fff"/></svg>
<div class="t" style="left:2700.5px;top:23.0px;font-size:18px;line-height:28px;height:28px;color:#333;font-weight:normal;">anyfish</div>
<svg style="left:2760px;top:6.5px;" width="60" height="60" viewBox="0 0 60 60"><circle cx="30" cy="30" r="30" fill="#b8dbf8"/>
<path d="M15,60 Q18,51.5 30,51 Q42,51.5 45,60 Z" fill="#f5f9fd"/>
<rect x="27" y="45" width="6" height="7" fill="#f7dcc8"/>
<ellipse cx="29.6" cy="36.5" rx="14" ry="12" fill="#fbeadf"/>
<path d="M14.5,34 C11.5,22 17,8.5 30.5,8.3 C43,8 48.5,17 46.2,27.5 C45.6,31 44.8,34 43.9,37 C43.2,32 42.2,28.8 40.5,27.8 C36,26.3 31,25.8 28,26.8 C24,28.2 20,30.3 18,31.3 C16.3,32.3 15.4,33.2 14.5,34 Z" fill="#4a3a3f"/>
<path d="M21,31.5 L25.5,31 M34.5,31 L39,31.5" stroke="#3a2e30" stroke-width="1.1"/>
<ellipse cx="23.3" cy="35.5" rx="1.4" ry="1.8" fill="#2a2222"/><ellipse cx="36.6" cy="35.5" rx="1.4" ry="1.8" fill="#2a2222"/>
<ellipse cx="21" cy="39.8" rx="2.2" ry="1.2" fill="#f6cfc8"/><ellipse cx="38.6" cy="39.8" rx="2.2" ry="1.2" fill="#f6cfc8"/>
<ellipse cx="30" cy="44.3" rx="1.6" ry="0.8" fill="#ef8a8a"/>
<ellipse cx="25.3" cy="53" rx="4.2" ry="2.6" transform="rotate(18 25.3 53)" fill="#4f8fe8"/><ellipse cx="34.7" cy="53" rx="4.2" ry="2.6" transform="rotate(-18 34.7 53)" fill="#4f8fe8"/></svg>
<div class="a" style="left:1680px;top:75px;width:1200px;height:1275px;background:#fff"></div>
<div class="a" style="left:1620px;top:75px;width:60px;height:1275px;background:linear-gradient(90deg,rgba(0,0,0,0) 0%,rgba(0,0,0,0.025) 35%,rgba(0,0,0,0.06) 70%,rgba(0,0,0,0.13) 100%)"></div>
<div class="a" style="left:1680px;top:75px;width:1200px;height:3px;background:#3165e0"></div>
<div class="t" style="left:1710.6px;top:100.8px;font-size:21px;line-height:33px;height:33px;color:#1a1f29;font-weight:bold;">详情列表</div>
<svg style="left:2816.5px;top:108px;" width="19" height="19" viewBox="0 0 19 19"><path d="M0.7,0.7 L18.3,18.3 M18.3,0.7 L0.7,18.3" stroke="#8c8c8c" stroke-width="1.7"/></svg>
<div class="a" style="left:1680px;top:155.5px;width:1200px;height:1.5px;background:#e6e8eb"></div>
<div class="a" style="left:1710.6px;top:172.5px;width:67.0px;height:44.19999999999999px;border:1.5px solid #e2e4e8;background:#fff"></div>
<svg style="left:1735px;top:185.5px;" width="18" height="18" viewBox="0 0 18 18"><path fill="none" stroke="#555" stroke-width="1.3" stroke-linejoin="round" d="M15.01,6.51 L17.14,6.91 L17.14,11.09 L15.01,11.49 L14.16,12.96 L14.88,15.00 L11.26,17.09 L9.85,15.44 L8.15,15.44 L6.74,17.09 L3.12,15.00 L3.84,12.96 L2.99,11.49 L0.86,11.09 L0.86,6.91 L2.99,6.51 L3.84,5.04 L3.12,3.00 L6.74,0.91 L8.15,2.56 L9.85,2.56 L11.26,0.91 L14.88,3.00 L14.16,5.04 Z"/><circle cx="9" cy="9" r="2.6" fill="none" stroke="#555" stroke-width="1.3"/></svg>
<div class="a" style="left:1795.5px;top:186px;width:1.0px;height:18px;background:#e2e3e6"></div>
<div class="a" style="left:1813.7px;top:172.5px;width:553.4999999999998px;height:44.19999999999999px;border:1.5px solid #dfe1e5;background:#fff"></div>
<div class="a" style="left:1985px;top:173px;width:1.5px;height:43px;background:#dfe1e5"></div>
<div class="a" style="left:2297px;top:173px;width:1.5px;height:43px;background:#dfe1e5"></div>
<div class="a" style="left:2298.5px;top:174px;width:67.19999999999982px;height:41.19999999999999px;background:#f5f7fa"></div>
<div class="t" style="left:1831px;top:180.6px;font-size:18px;line-height:28px;height:28px;color:#333;font-weight:normal;">养殖品种</div>
<svg style="left:1949px;top:190.5px;" width="15" height="9" viewBox="0 0 15 9"><path d="M0.8,0.8 L7.5,8 L14.2,0.8" fill="none" stroke="#2a5bd7" stroke-width="1.8"/></svg>
<div class="t" style="left:2002.2px;top:178.1px;font-size:21px;line-height:33px;height:33px;color:#b4b8bf;font-weight:normal;">请输入关键词</div>
<svg style="left:2323px;top:186px;" width="19" height="18" viewBox="0 0 19 18"><circle cx="8.5" cy="8.5" r="7.4" fill="none" stroke="#262626" stroke-width="1.8"/><path d="M13.8,13.8 L17,17" stroke="#262626" stroke-width="1.8" stroke-linecap="round"/></svg>
<div class="a" style="left:1710.6px;top:235.3px;width:1139.1px;height:147.5px;border:1.5px solid #e6e8ec;background:#fff"></div>
<div class="a" style="left:1712px;top:236.8px;width:1136.1999999999998px;height:51.80000000000001px;background:#eff2f7"></div>
<div class="a" style="left:1712px;top:288px;width:1136.1999999999998px;height:1.5px;background:#e6e8ec"></div>
<div class="t" style="left:1728.4px;top:246.8px;font-size:18px;line-height:28px;height:28px;color:#1f2329;font-weight:bold;">操作时间</div>
<div class="t" style="left:1896.4px;top:246.8px;font-size:18px;line-height:28px;height:28px;color:#1f2329;font-weight:bold;">品种类目</div>
<div class="t" style="left:2058.5px;top:246.8px;font-size:18px;line-height:28px;height:28px;color:#1f2329;font-weight:bold;">养殖品种</div>
<div class="t" style="left:2220px;top:246.8px;font-size:18px;line-height:28px;height:28px;color:#1f2329;font-weight:bold;">养殖批次</div>
<div class="t" style="left:2382px;top:246.8px;font-size:18px;line-height:28px;height:28px;color:#1f2329;font-weight:bold;">捕捞总量</div>
<div class="t" style="left:2544.4px;top:246.8px;font-size:18px;line-height:28px;height:28px;color:#1f2329;font-weight:bold;">捕捞单位</div>
<div class="t" style="left:2706px;top:246.8px;font-size:18px;line-height:28px;height:28px;color:#1f2329;font-weight:bold;">负责人</div>
<div class="t" style="left:1728.4px;top:321.0px;font-size:18px;line-height:28px;height:28px;color:#606266;font-weight:normal;">2025-06-06</div>
<div class="t" style="left:1896.4px;top:303.6px;font-size:18px;line-height:28px;height:28px;color:#606266;font-weight:normal;">虾类-淡水虾类-</div>
<div class="t" style="left:1896.4px;top:339.1px;font-size:18px;line-height:28px;height:28px;color:#606266;font-weight:normal;">长臂虾科</div>
<div class="t" style="left:2058.5px;top:321.3px;font-size:18px;line-height:28px;height:28px;color:#606266;font-weight:normal;">葛氏长臂虾</div>
<div class="t" style="left:2220px;top:303.6px;font-size:18px;line-height:28px;height:28px;color:#606266;font-weight:normal;">葛氏长臂虾计划</div>
<div class="t" style="left:2220px;top:339.1px;font-size:18px;line-height:28px;height:28px;color:#606266;font-weight:normal;">批次</div>
<div class="t" style="left:2382px;top:321.0px;font-size:18px;line-height:28px;height:28px;color:#606266;font-weight:normal;">20</div>
<div class="t" style="left:2544.4px;top:321.3px;font-size:18px;line-height:28px;height:28px;color:#606266;font-weight:normal;">尾</div>
<div class="t" style="left:2706px;top:321.3px;font-size:18px;line-height:28px;height:28px;color:#606266;font-weight:normal;">赵大田</div>
<div class="t" style="left:2302px;top:413.3px;font-size:18px;line-height:28px;height:28px;color:#606266;font-weight:normal;">共 1 条</div>
<div class="a" style="left:2382px;top:406.8px;width:149px;height:40.69999999999999px;border:1.5px solid #dfe1e5;background:#fff"></div>
<div class="t" style="left:2395.4px;top:413.3px;font-size:18px;line-height:28px;height:28px;color:#333;font-weight:normal;">10条/页</div>
<svg style="left:2503px;top:422.5px;" width="15" height="9" viewBox="0 0 15 9"><path d="M0.8,0.8 L7.5,8 L14.2,0.8" fill="none" stroke="#2a5bd7" stroke-width="1.8"/></svg>
<svg style="left:2569px;top:420px;" width="8" height="14" viewBox="0 0 8 14"><path d="M7,1 L1,7 L7,13" fill="none" stroke="#b8bcc4" stroke-width="1.5"/></svg>
<div class="t" style="left:2605px;top:413.0px;font-size:18px;line-height:28px;height:28px;color:#2a5bd7;font-weight:bold;">1</div>
<svg style="left:2642px;top:420px;" width="8" height="14" viewBox="0 0 8 14"><path d="M1,1 L7,7 L1,13" fill="none" stroke="#b8bcc4" stroke-width="1.5"/></svg>
<div class="t" style="left:2688px;top:413.3px;font-size:18px;line-height:28px;height:28px;color:#606266;font-weight:normal;">前往</div>
<div class="a" style="left:2736.4px;top:406.8px;width:82.59999999999991px;height:40.69999999999999px;border:1.5px solid #dfe1e5;background:#fff"></div>
<div class="t" style="left:2772px;top:413.0px;font-size:18px;line-height:28px;height:28px;color:#333;font-weight:normal;">1</div>
<div class="t" style="left:2832.5px;top:413.3px;font-size:18px;line-height:28px;height:28px;color:#606266;font-weight:normal;">页</div>
</body></html>
